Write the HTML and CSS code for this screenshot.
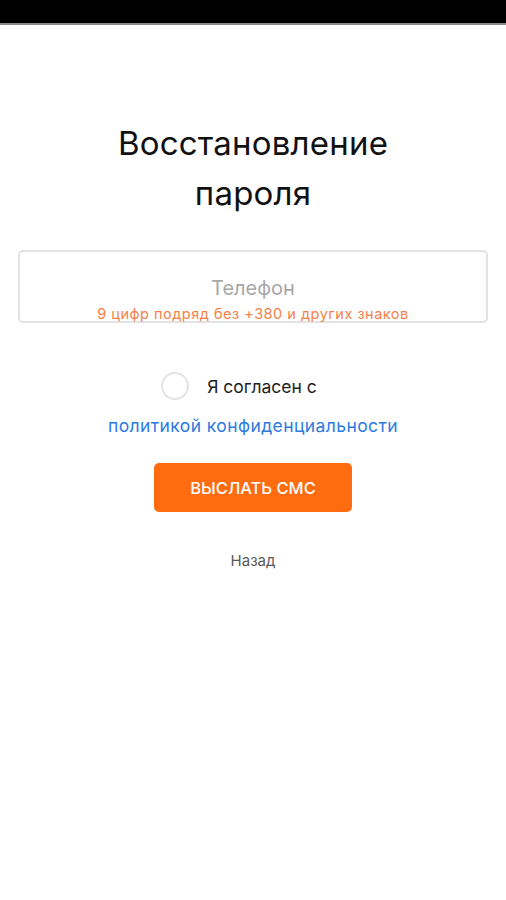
FILE: index.html
```html
<!DOCTYPE html>
<html lang="ru">
<head>
    <meta charset="UTF-8">
    <meta name="viewport" content="width=device-width, initial-scale=1.0">
    <title>Восстановление пароля</title>
    <link rel="stylesheet" href="styles.css">
</head>
<body>
    <div class="status-bar"></div>

    <div class="page">
        <h1 class="title">Восстановление<br>пароля</h1>

        <!-- Phone field -->
        <div class="phone-box">
            <input type="tel" class="phone-input" placeholder="Телефон">
            <div class="hint">9 цифр подряд без +380 и других знаков</div>
        </div>

        <label class="agree">
            <span class="circle"></span>
            <span class="agree-text">Я согласен с</span>
        </label>
        <a href="#" class="policy">политикой конфиденциальности</a>

        <button type="button" class="send-btn">ВЫСЛАТЬ СМС</button>

        <a href="#" class="back">Назад</a>
    </div>
</body>
</html>
```

FILE: styles.css
```css
* {
    margin: 0;
    padding: 0;
    box-sizing: border-box;
}

body {
    font-family: 'Inter', 'Roboto', sans-serif;
    background: #fff;
    width: 506px;
    height: 900px;
    overflow: hidden;
}

.status-bar {
    height: 25px;
    background: #000;
    border-bottom: 2px solid #8a8a8a;
}

.page {
    display: flex;
    flex-direction: column;
    align-items: center;
    padding: 0 18px;
}

.title {
    margin-top: 93px;
    font-weight: 400;
    font-size: 33px;
    line-height: 50px;
    color: #111;
    text-align: center;
    letter-spacing: 0.2px;
}

.phone-box {
    margin-top: 32px;
    width: 470px;
    height: 73px;
    border: 2px solid #e3e3e3;
    border-radius: 5px;
    display: flex;
    flex-direction: column;
    align-items: center;
    padding-top: 22px;
}

.phone-input {
    width: 100%;
    border: none;
    outline: none;
    text-align: center;
    font-family: inherit;
    font-size: 20px;
    line-height: 28px;
    color: #333;
}

.phone-input::placeholder {
    color: #a8a8a8;
}

.hint {
    margin-top: 3px;
    font-size: 14.5px;
    line-height: 18px;
    color: #f5814a;
    letter-spacing: 0.5px;
}

.agree {
    margin-top: 49px;
    display: flex;
    align-items: center;
    gap: 18px;
    margin-left: -28px;
    cursor: pointer;
}

.circle {
    width: 28px;
    height: 28px;
    border: 2px solid #e4e4e4;
    border-radius: 50%;
}

.agree-text {
    font-size: 17.5px;
    color: #222;
}

.policy {
    margin-top: 15px;
    font-size: 17.5px;
    color: #2d7ae0;
    text-decoration: none;
    letter-spacing: 0.4px;
}

.send-btn {
    margin-top: 27px;
    width: 198px;
    height: 49px;
    background: #ff6b0f;
    color: #fff;
    border: none;
    border-radius: 5px;
    font-family: inherit;
    font-size: 16.5px;
    font-weight: 500;
    cursor: pointer;
}

.back {
    margin-top: 39px;
    font-size: 15px;
    color: #5a5a5a;
    text-decoration: none;
}
```
